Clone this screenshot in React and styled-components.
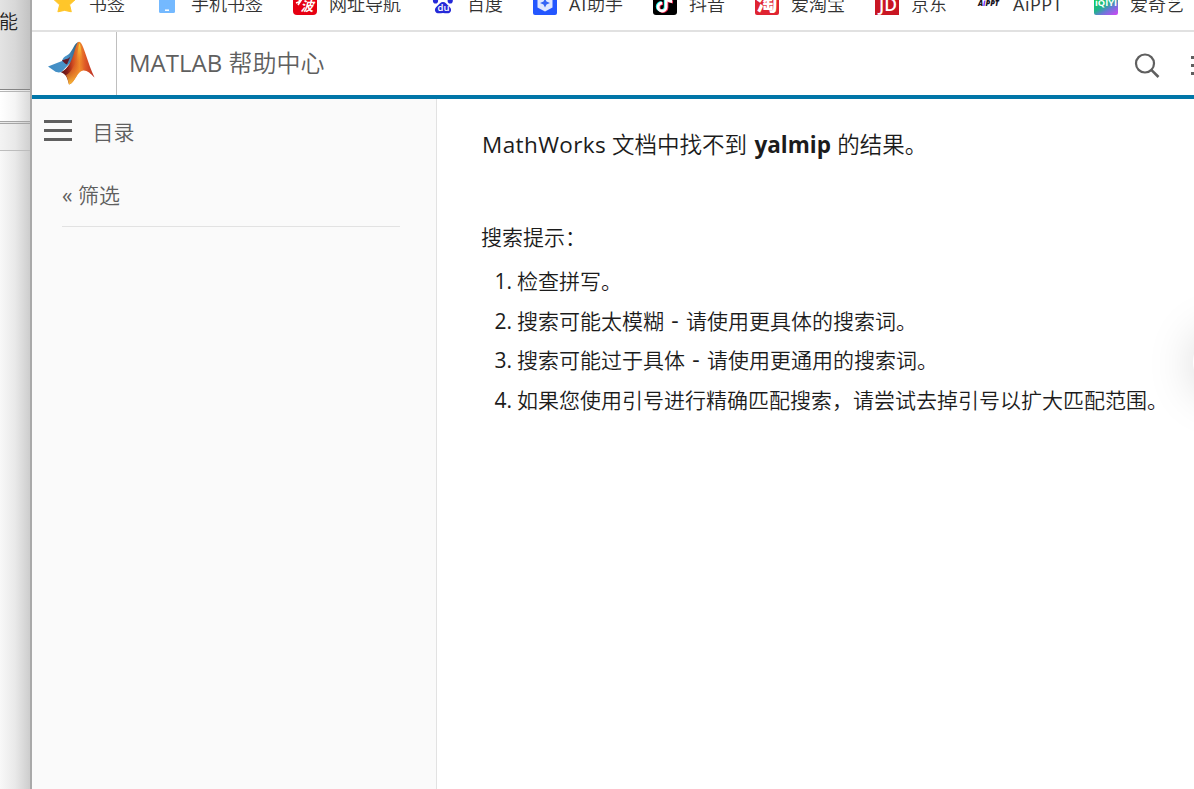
import styled, { createGlobalStyle } from 'styled-components'

const GlobalStyle = createGlobalStyle`
    * {
        box-sizing: border-box;
    }
    body {
        margin: 0;
        background-color: #fff;
        font-family: "Open Sans", "Noto Sans CJK SC", sans-serif;
        color: #1c1c1c;
    }
`

const Container = styled.div`
    display: flex;
    width: 1194px;
    height: 789px;
    overflow: hidden;
`

const BackWindow = styled.div`
    width: 32px;
    flex: none;
    display: flex;
    flex-direction: column;
    border-right: 2px solid #a9a9a9;
`

const BackPane = styled.div`
    height: ${props => props.height};
    flex: ${props => props.height ? 'none' : 1};
    background: linear-gradient(to right, ${props => props.from}, ${props => props.mid} 50%, ${props => props.to});
    border-bottom: ${props => props.line ? `1px solid ${props.line}` : 'none'};
    overflow: hidden;
`

const BackLabel = styled.div`
    padding-top: 9px;
    margin-left: -1px;
    font-size: 19px;
    line-height: 26px;
    font-weight: 350;
    color: #222;
`

const Browser = styled.div`
    flex: 1;
    min-width: 0;
    display: flex;
    flex-direction: column;
`

const BookmarkBar = styled.div`
    height: 32px;
    flex: none;
    display: flex;
    gap: 30px;
    padding-left: 21px;
    border-bottom: 2px solid #e1e1e1;
    overflow: hidden;
`

const Bookmark = styled.div`
    display: flex;
    flex: none;
    gap: 12px;
    height: 24px;
    margin-top: -9px;
    align-items: center;
`

const BookmarkIcon = styled.svg`
    width: 24px;
    height: 24px;
    display: block;
`

const IconText = styled.text`
    font-family: ${props => props.$cjk ? '"Noto Sans CJK SC"' : '"Open Sans"'}, sans-serif;
    font-size: ${props => props.$size}px;
    font-weight: ${props => props.$weight || 700};
    font-style: ${props => props.$italic ? 'italic' : 'normal'};
`

const BookmarkText = styled.span`
    width: ${props => props.width}px;
    font-size: 18px;
    line-height: 26px;
    font-weight: 350;
    color: #333;
    white-space: nowrap;
    padding-top: 2px;
`

const Header = styled.header`
    height: 67px;
    flex: none;
    display: flex;
    border-bottom: 4px solid #0076a8;
`

const LogoBox = styled.div`
    width: 85px;
    padding: 9px 0 0 16px;
    border-right: 1px solid #bfbfbf;
`

const Title = styled.h1`
    flex: 1;
    margin: 0;
    padding-left: 12px;
    font-size: 24px;
    line-height: 62px;
    font-weight: 350;
    color: #5f5f5f;
`

const Latin = styled.span`
    font-weight: 400;
    letter-spacing: ${props => props.spacing || 'normal'};
`

const HeaderTools = styled.div`
    display: flex;
    width: 60px;
    gap: 31px;
    padding-top: 21px;
    overflow: hidden;
`

const ToolIcon = styled.svg`
    flex: none;
    display: block;
`

const Main = styled.div`
    flex: 1;
    display: flex;
`

const Sidebar = styled.aside`
    width: 405px;
    flex: none;
    background-color: #fafafa;
    border-right: 1px solid #e2e2e2;
`

const SidebarTop = styled.div`
    display: flex;
    height: 68px;
    padding: 20px 0 0 12.4px;
    gap: 20px;
`

const MenuLines = styled.div`
    display: flex;
    flex-direction: column;
    width: 28px;
    gap: 6px;
    padding-top: 1px;
`

const Line = styled.div`
    height: 3px;
    background-color: #5f5f5f;
`

const SidebarText = styled.div`
    font-size: 21px;
    line-height: 26px;
    font-weight: 350;
    color: #5f5f5f;
`

const Filter = styled.div`
    margin: 0 36px 0 30px;
    height: 60px;
    padding-top: 15px;
    border-bottom: 1px solid #e2e2e2;
`

const Content = styled.main`
    flex: 1;
    position: relative;
    overflow: hidden;
    padding-left: 45px;
    font-weight: 350;
`

const Message = styled.p`
    margin: 29px 0 0;
    font-size: 22.5px;
    line-height: 34px;
    white-space: nowrap;
`

const Bold = styled.b`
    font-weight: 700;
    margin: 0 0.5px 0 1.5px;
`

const TipsTitle = styled.p`
    margin: 59px 0 0 -1px;
    font-size: 21px;
    line-height: 32px;
`

const Tips = styled.ol`
    margin: 9px 0 0;
    padding: 0;
    list-style: none;
    font-size: 21px;
`

const Tip = styled.li`
    display: flex;
    height: 39.6px;
    line-height: 39.6px;
    white-space: nowrap;
`

const TipNumber = styled.span`
    width: 30px;
    margin-right: 5px;
    text-align: right;
    font-weight: 400;
    font-size: 21px;
`

const Dash = styled.span`
    display: inline-block;
    width: 22px;
    text-align: center;
    font-weight: 400;
    font-size: 23px;
    line-height: 1;
`

const FloatShadow = styled.div`
    position: absolute;
    right: -63px;
    top: 231px;
    width: 64px;
    height: 64px;
    border-radius: 50%;
    background-color: #fff;
    box-shadow: 0 2px 48px rgba(0, 0, 0, 0.17);
`

const StarIcon = () => (
  <BookmarkIcon viewBox="0 0 24 24">
    <path d="M11.6 1.2 14.7 8l7.3.8-5.4 5 1.7 7-6.7-1.4-6.7 1.4 1.7-7-5.4-5L8.5 8z" fill="#ffc62a" stroke="#ffc62a" strokeLinejoin="round" />
  </BookmarkIcon>
)

const PhoneIcon = () => (
  <BookmarkIcon viewBox="0 0 24 24">
    <rect x="4" y="1" width="16" height="21" rx="1.5" fill="#74b9ff" />
    <path d="M10 19.2h4" stroke="#fff" strokeWidth="1.5" />
  </BookmarkIcon>
)

const NavIcon = () => (
  <BookmarkIcon viewBox="0 0 24 24">
    <rect width="24" height="24" rx="4" fill="#e60012" />
    <path d="M3 12l4-1.5M5 8l2 1.5M9 8l-4 6" stroke="#fff" strokeWidth="1.6" fill="none" />
    <IconText $cjk $size="13" $weight="700" $italic x="7.5" y="20" fill="#fff">波</IconText>
  </BookmarkIcon>
)

const BaiduIcon = () => (
  <BookmarkIcon viewBox="0 0 24 24">
    <g fill="#2529d8">
      <ellipse cx="4.5" cy="9.8" rx="2.6" ry="2.8" />
      <ellipse cx="19.2" cy="9.8" rx="2.6" ry="2.8" />
      <ellipse cx="9" cy="5" rx="2.4" ry="3.3" />
      <ellipse cx="15" cy="5" rx="2.4" ry="3.3" />
      <path d="M12 11c2.500 0 3.500 2 5.500 3.700 2.300 2 3 3.700 2.300 5.500-1.300 3.300-5.200 1.800-7.800 1.800s-6.500 1.500-7.800-1.800c-.7-1.800 0-3.500 2.300-5.500 2-1.700 3-3.700 5.500-3.700z" />
    </g>
    <IconText $size="9.5" $weight="600" x="6.500" y="20.300" fill="#fff">du</IconText>
  </BookmarkIcon>
)

const AssistantIcon = () => (
  <BookmarkIcon viewBox="0 0 24 24">
    <rect width="24" height="24" rx="2" fill="#2457ff" />
    <path d="M12 3l7.5 3.5v10L12 20.500l-7.500-4v-10z" fill="#dfe8ff" />
    <path d="M12 7.5l1.500 3 3.500 1.500-3.500 1.500-1.500 3-1.500-3L7 12l3.500-1.500z" fill="#3565f5" />
  </BookmarkIcon>
)

const DouyinIcon = () => (
  <BookmarkIcon viewBox="0 0 24 24">
    <rect width="24" height="24" rx="3" fill="#000" />
    <g fill="none" strokeWidth="2.8">
      <path d="M12.200 4v11.500a4 4 0 1 1-4-4M12.200 5c.7 3.500 2.500 4.800 6 5" stroke="#25f4ee" />
      <path d="M14 5v11.500a4 4 0 1 1-4-4M14 6c.7 3.500 2.500 4.800 6 5" stroke="#fe2c55" />
      <path d="M13.100 4.500V16a4 4 0 1 1-4-4M13.100 5.500c.7 3.500 2.500 4.800 6 5" stroke="#fff" />
    </g>
  </BookmarkIcon>
)

const TaobaoIcon = () => (
  <BookmarkIcon viewBox="0 0 24 24">
    <rect width="24" height="24" rx="2" fill="#df2432" />
    <IconText $cjk $size="21" $weight="900" x="1.5" y="18.5" fill="#fff">淘</IconText>
  </BookmarkIcon>
)

const JdIcon = () => (
  <BookmarkIcon viewBox="0 0 24 24">
    <rect width="24" height="24" fill="#c91623" />
    <IconText $size="18" $weight="600" x="4" y="19.5" fill="#fff" textLength="18" lengthAdjust="spacingAndGlyphs">JD</IconText>
  </BookmarkIcon>
)

const AipptIcon = () => (
  <BookmarkIcon viewBox="0 0 24 24">
    <IconText $size="8.5" $weight="800" $italic x="1" y="15" fill="#171321" textLength="21" lengthAdjust="spacingAndGlyphs">
      A<tspan fill="#7a35ff">i</tspan>PPT
    </IconText>
  </BookmarkIcon>
)

const IqiyiIcon = () => (
  <BookmarkIcon viewBox="0 0 24 24">
    <defs>
      <linearGradient id="iqiyi" x1="0.3" y1="0.3" x2="0.8" y2="1.1">
        <stop offset="0" stopColor="#12c95a" />
        <stop offset="0.35" stopColor="#20b38c" />
        <stop offset="0.6" stopColor="#6a78d8" />
        <stop offset="1" stopColor="#d045f5" />
      </linearGradient>
    </defs>
    <rect width="24" height="24" rx="2" fill="url(#iqiyi)" />
    <IconText $size="9.5" $weight="700" x="1" y="15" fill="#fff" textLength="22" lengthAdjust="spacingAndGlyphs">iQIYI</IconText>
  </BookmarkIcon>
)

const MatlabLogo = () => (
  <ToolIcon width="50" height="46" viewBox="0 0 50 46">
    <defs>
      <linearGradient id="wing" x1="0" y1="0" x2="1" y2="0">
        <stop offset="0" stopColor="#3f8cc4" />
        <stop offset="0.6" stopColor="#4a94c9" />
        <stop offset="1" stopColor="#2b5a78" />
      </linearGradient>
      <linearGradient id="peak" x1="0" y1="0" x2="1" y2="0">
        <stop offset="0" stopColor="#54121a" />
        <stop offset="0.2" stopColor="#8a1f18" />
        <stop offset="0.35" stopColor="#cf4a20" />
        <stop offset="0.55" stopColor="#f08c2c" />
        <stop offset="0.72" stopColor="#df5a27" />
        <stop offset="1" stopColor="#b92b22" />
      </linearGradient>
      <linearGradient id="glow" x1="0" y1="0" x2="0" y2="1">
        <stop offset="0" stopColor="#f8db3b" />
        <stop offset="0.5" stopColor="#f6b63a" stopOpacity="0.5" />
        <stop offset="1" stopColor="#ee822f" stopOpacity="0" />
      </linearGradient>
      <linearGradient id="base" x1="0" y1="0" x2="0" y2="1">
        <stop offset="0" stopColor="#e8702a" stopOpacity="0" />
        <stop offset="1" stopColor="#fbbf35" />
      </linearGradient>
    </defs>
    <path d="M0 25.500 14 20c1-4 4-5 7-7 3.500-3 5.500-12 10-12l-5 17-12.500 13c-2.500.8-5 .5-7-1z" fill="url(#wing)" />
    <path d="M14 19.500c3-1.500 6-1 8.500-4l-3.500 8c-1.500-.5-3.500-2.500-5-4z" fill="#651c2a" />
    <path d="M31 .8c2.500 0 4.500 6 7 13.500 2.500 7.500 5 15 8.500 22.200-4-4-7.500-7.500-11.500-7C29 30 27 42 21 43.500c-1.500-5-2-10-8-12.200C20 28 23.500 20 26 12c1.500-5 3-11.200 5-11.200z" fill="url(#peak)" />
    <path d="M18 34c4-1 8-9 10-14h5c1 4 2 7 2 9.500C29 30 27 42 21 43.500c-.8-3.500-1.300-6.500-3-9.500z" fill="url(#base)" />
    <path d="M31.300 2.500c1.700 2 2.700 12 2.700 19l-5-1c0-6 1-13 2.300-18z" fill="url(#glow)" />
  </ToolIcon>
)

const bookmarks = [
  { name: '书签', width: 36, Icon: StarIcon },
  { name: '手机书签', width: 72, Icon: PhoneIcon },
  { name: '网址导航', width: 72, Icon: NavIcon },
  { name: '百度', width: 36, Icon: BaiduIcon },
  { latin: 'AI', name: '助手', width: 54, Icon: AssistantIcon },
  { name: '抖音', width: 36, Icon: DouyinIcon },
  { name: '爱淘宝', width: 54, Icon: TaobaoIcon },
  { name: '京东', width: 36, Icon: JdIcon },
  { latin: 'AiPPT', name: '', width: 51, Icon: AipptIcon },
  { name: '爱奇艺', width: 54, Icon: IqiyiIcon },
]

const tips = [
  ['检查拼写。'],
  ['搜索可能太模糊', '请使用更具体的搜索词。'],
  ['搜索可能过于具体', '请使用更通用的搜索词。'],
  ['如果您使用引号进行精确匹配搜索，请尝试去掉引号以扩大匹配范围。'],
]

export default function App() {
  return (
    <Container>
      <GlobalStyle />
      <BackWindow>
        <BackPane height="90px" from="#e3e3e3" mid="#d8d8d8" to="#c3c3c3" line="#858585">
          <BackLabel>能</BackLabel>
        </BackPane>
        <BackPane height="2px" from="#fff" mid="#eee" to="#ddd" line="#b5b5b5" />
        <BackPane height="30px" from="#fff" mid="#f5f5f5" to="#dadada" line="#a5a5a5" />
        <BackPane height="2px" from="#eee" mid="#e5e5e5" to="#ccc" line="#a5a5a5" />
        <BackPane height="27px" from="#f3f3f3" mid="#e9e9e9" to="#d0d0d0" line="#bdbdbd" />
        <BackPane from="#f8f8f8" mid="#e9e9e9" to="#cdcdcd" />
      </BackWindow>
      <Browser>
        <BookmarkBar>
          {bookmarks.map(({ latin, name, width, Icon }) => (
            <Bookmark key={width + name}>
              <Icon />
              <BookmarkText width={width}>
                {latin && <Latin spacing={name ? '0.8px' : '0.5px'}>{latin}</Latin>}
                {name}
              </BookmarkText>
            </Bookmark>
          ))}
        </BookmarkBar>
        <Header>
          <LogoBox>
            <MatlabLogo />
          </LogoBox>
          <Title><Latin>MATLAB</Latin> 帮助中心</Title>
          <HeaderTools>
            <ToolIcon width="26" height="26" viewBox="0 0 26 26" fill="none" stroke="#5f5f5f" strokeWidth="2.2">
              <circle cx="11" cy="10.5" r="9" />
              <path d="M17.300 16.800l7.200 7.200" strokeWidth="2.6" />
            </ToolIcon>
            <ToolIcon width="4" height="26" viewBox="0 0 4 26" fill="#5f5f5f">
              <rect y="3" width="4" height="3" />
              <rect y="11" width="4" height="3" />
              <rect y="19" width="4" height="3" />
            </ToolIcon>
          </HeaderTools>
        </Header>
        <Main>
          <Sidebar>
            <SidebarTop>
              <MenuLines>
                <Line />
                <Line />
                <Line />
              </MenuLines>
              <SidebarText>目录</SidebarText>
            </SidebarTop>
            <Filter>
              <SidebarText><Latin>«</Latin> 筛选</SidebarText>
            </Filter>
          </Sidebar>
          <Content>
            <Message><Latin spacing="0.4px">MathWorks</Latin> 文档中找不到 <Bold>yalmip</Bold> 的结果。</Message>
            <TipsTitle>搜索提示：</TipsTitle>
            <Tips>
              {tips.map(([first, second], i) => (
                <Tip key={first}>
                  <TipNumber>{i + 1}.</TipNumber>
                  <span>
                    {first}
                    {second && <Dash>-</Dash>}
                    {second}
                  </span>
                </Tip>
              ))}
            </Tips>
            <FloatShadow />
          </Content>
        </Main>
      </Browser>
    </Container>
  )
}
